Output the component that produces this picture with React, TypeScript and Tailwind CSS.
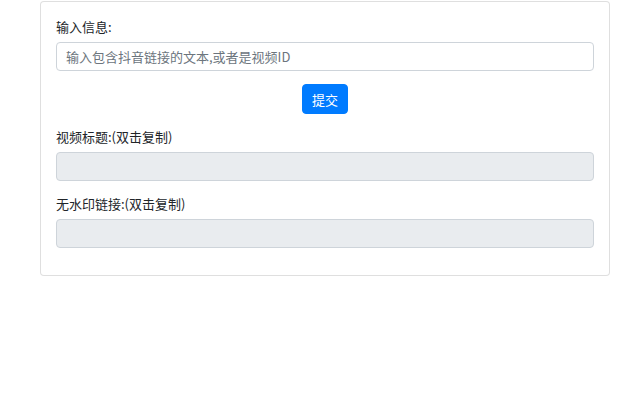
import React from "react";

export default function App() {
  return (
    <div
      className="min-h-[396px] bg-white text-[13px] leading-[19px] text-[#212529]"
      style={{ fontFamily: '"Noto Sans CJK SC", "Noto Sans", sans-serif' }}
    >
      <div className="pt-px pl-[40px]">
        <div className="w-[570px] rounded-[4px] border border-[rgba(0,0,0,0.125)] bg-white px-[15px] pt-[15px] pb-[14px]">
          <div className="mb-[13px]">
            <label className="mb-[6px] block h-[19px]">输入信息:</label>
            <input
              type="text"
              placeholder="输入包含抖音链接的文本,或者是视频ID"
              className="block h-[29px] w-full rounded-[4px] border border-[#ced4da] bg-white px-[9px] text-[13px] text-[#495057] outline-none placeholder:text-[#6c757d]"
            />
          </div>
          <div className="mb-[13px] flex justify-center">
            <button className="h-[30px] rounded-[4px] border border-[#007bff] bg-[#007bff] px-[9px] text-[13px] leading-[19px] text-white">
              提交
            </button>
          </div>
          <div className="mb-[13px]">
            <label className="mb-[6px] block h-[19px]">视频标题:(双击复制)</label>
            <input
              type="text"
              readOnly
              className="block h-[29px] w-full rounded-[4px] border border-[#ced4da] bg-[#e9ecef] px-[9px] text-[13px] outline-none"
            />
          </div>
          <div className="mb-[13px]">
            <label className="mb-[6px] block h-[19px]">无水印链接:(双击复制)</label>
            <input
              type="text"
              readOnly
              className="block h-[29px] w-full rounded-[4px] border border-[#ced4da] bg-[#e9ecef] px-[9px] text-[13px] outline-none"
            />
          </div>
        </div>
      </div>
    </div>
  );
}
